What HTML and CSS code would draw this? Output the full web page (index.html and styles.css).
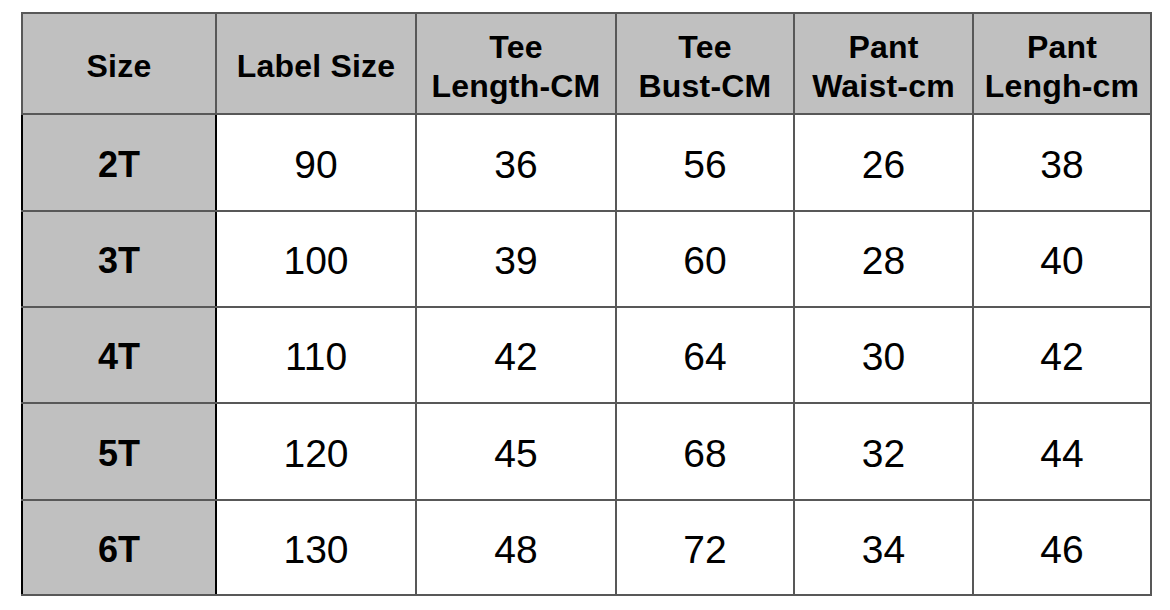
FILE: index.html
```html
<!DOCTYPE html>
<html>
<head>
<meta charset="utf-8">
<link rel="stylesheet" href="styles.css">
</head>
<body>
<table class="size-chart">
  <colgroup>
    <col class="c1"><col class="c2"><col class="c3"><col class="c4"><col class="c5"><col class="c6">
  </colgroup>
  <thead>
    <tr class="head-row">
      <th>Size</th>
      <th>Label Size</th>
      <th>Tee<br>Length-CM</th>
      <th>Tee<br>Bust-CM</th>
      <th>Pant<br>Waist-cm</th>
      <th>Pant<br>Lengh-cm</th>
    </tr>
  </thead>
  <tbody>
    <tr class="r1"><th class="size">2T</th><td>90</td><td>36</td><td>56</td><td>26</td><td>38</td></tr>
    <tr class="r2"><th class="size">3T</th><td>100</td><td>39</td><td>60</td><td>28</td><td>40</td></tr>
    <tr class="r3"><th class="size">4T</th><td>110</td><td>42</td><td>64</td><td>30</td><td>42</td></tr>
    <tr class="r4"><th class="size">5T</th><td>120</td><td>45</td><td>68</td><td>32</td><td>44</td></tr>
    <tr class="r5"><th class="size">6T</th><td>130</td><td>48</td><td>72</td><td>34</td><td>46</td></tr>
  </tbody>
</table>
</body>
</html>
```
FILE: styles.css
```css
html, body {
  margin: 0;
  padding: 0;
  background: #ffffff;
}

body {
  font-family: "Liberation Sans", Arial, Helvetica, sans-serif;
  color: #000;
}

.size-chart {
  margin: 12px 0 0 21px;
  border-collapse: collapse;
  table-layout: fixed;
  width: 1131px;
}

.c1 { width: 194px; }
.c2 { width: 200px; }
.c3 { width: 200px; }
.c4 { width: 178px; }
.c5 { width: 179px; }
.c6 { width: 178px; }

.size-chart th,
.size-chart td {
  border: 2px solid #585858;
  text-align: center;
  vertical-align: middle;
  padding: 4px 0 0 0;
}

.head-row th {
  background: #c0c0c0;
  font-weight: bold;
  font-size: 32px;
  letter-spacing: 0.2px;
  line-height: 39px;
  padding-top: 6px;
}

.head-row { height: 101px; }
.r1 { height: 97px; }
.r2 { height: 96px; }
.r3 { height: 96px; }
.r4 { height: 97px; }
.r5 { height: 95px; }

tbody th.size {
  background: #c0c0c0;
  font-weight: bold;
  font-size: 36px;
  border-left-color: #000;
  border-right-color: #000;
}

tbody td {
  font-size: 39px;
  font-weight: normal;
  background: #fff;
}
```
